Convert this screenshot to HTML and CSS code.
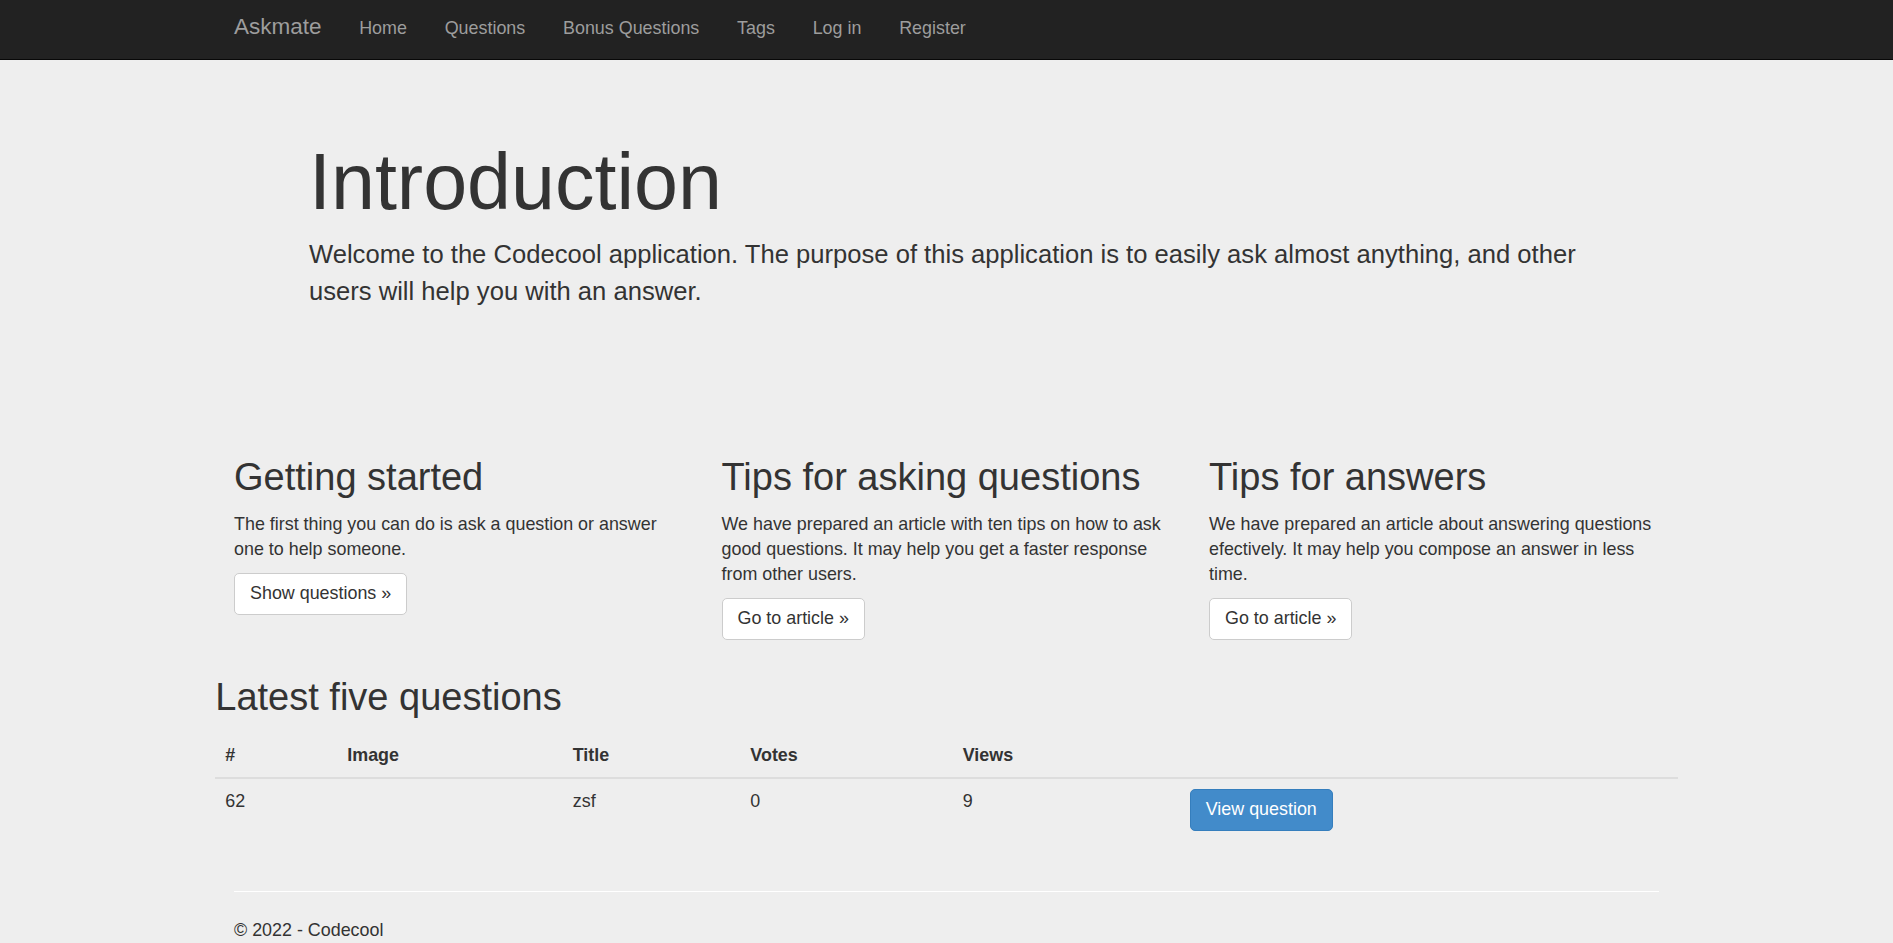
FILE: index.html
```html
<!DOCTYPE html>
<html lang="en">
<head>
<meta charset="utf-8">
<title>Askmate</title>
<link rel="stylesheet" href="styles.css">
</head>
<body>
<header class="navbar">
  <div class="container nav-inner">
    <a class="brand" href="#">Askmate</a>
    <ul class="nav-links">
      <li><a href="#">Home</a></li>
      <li><a href="#">Questions</a></li>
      <li><a href="#">Bonus Questions</a></li>
      <li><a href="#">Tags</a></li>
      <li><a href="#">Log in</a></li>
      <li><a href="#">Register</a></li>
    </ul>
  </div>
</header>

<main class="container">
  <section class="jumbotron">
    <h1>Introduction</h1>
    <p>Welcome to the Codecool application. The purpose of this application is to easily ask almost anything, and other users will help you with an answer.</p>
  </section>

  <section class="cols">
    <div class="col">
      <h2>Getting started</h2>
      <p>The first thing you can do is ask a question or answer one to help someone.</p>
      <p><a class="btn btn-default" href="#">Show questions &raquo;</a></p>
    </div>
    <div class="col">
      <h2>Tips for asking questions</h2>
      <p>We have prepared an article with ten tips on how to ask good questions. It may help you get a faster response from other users.</p>
      <p><a class="btn btn-default" href="#">Go to article &raquo;</a></p>
    </div>
    <div class="col">
      <h2>Tips for answers</h2>
      <p>We have prepared an article about answering questions efectively. It may help you compose an answer in less time.</p>
      <p><a class="btn btn-default" href="#">Go to article &raquo;</a></p>
    </div>
  </section>

  <section class="latest">
    <h2>Latest five questions</h2>
    <table class="table">
      <colgroup>
        <col class="c-id"><col class="c-img"><col class="c-title"><col class="c-votes"><col class="c-views"><col class="c-action">
      </colgroup>
      <thead>
        <tr><th>#</th><th>Image</th><th>Title</th><th>Votes</th><th>Views</th><th></th></tr>
      </thead>
      <tbody>
        <tr><td>62</td><td></td><td>zsf</td><td>0</td><td>9</td><td><a class="btn btn-primary" href="#">View question</a></td></tr>
      </tbody>
    </table>
  </section>

  <footer class="footer">
    <hr>
    <p>&copy; 2022 - Codecool</p>
  </footer>
</main>
</body>
</html>
```

FILE: styles.css
```css
* { box-sizing: border-box; }

html, body {
  margin: 0;
  padding: 0;
}

body {
  background: #eeeeee;
  color: #333333;
  font-family: "Liberation Sans", Arial, Helvetica, sans-serif;
  font-size: 17.9px;
  line-height: 25px;
  overflow: hidden;
}

a { text-decoration: none; }

.container {
  width: 1462.5px;
  margin: 0 auto;
  padding: 0 18.75px;
}

/* navbar */
.navbar {
  background: #222222;
  border-bottom: 1px solid #080808;
  height: 60px;
}

.nav-inner {
  display: flex;
  align-items: flex-start;
}

.brand {
  margin-left: -18.75px;
  padding: 14px 18.75px 0;
  height: 59px;
  font-size: 22.5px;
  line-height: 25px;
  color: #9d9d9d;
}

.nav-links {
  display: flex;
  list-style: none;
  margin: 0;
  padding: 0;
}

.nav-links a {
  display: block;
  padding: 16px 18.9px 18px;
  font-size: 17.9px;
  line-height: 25px;
  color: #9d9d9d;
}

/* jumbotron */
.jumbotron {
  padding: 79.4px 75px 60px;
  margin-bottom: 41px;
}

.jumbotron h1 {
  margin: 0 0 10px;
  font-size: 79px;
  line-height: 86.625px;
  font-weight: normal;
  color: #333333;
}

.jumbotron p {
  margin: 0 0 20.5px;
  font-size: 25.6px;
  line-height: 37px;
}

/* columns */
.cols {
  display: grid;
  grid-template-columns: repeat(3, 1fr);
  column-gap: 37.5px;
}

.col h2,
.latest h2 {
  margin: 25px 0 14px;
  font-size: 38px;
  line-height: 41.25px;
  font-weight: normal;
}

.col p {
  margin: 0 0 11.5px;
}

.col p:last-child {
  margin-top: -0.5px;
}

.latest h2 {
  margin-top: 26px;
  margin-bottom: 14px;
}

.btn {
  display: inline-block;
  padding: 7.5px 15px;
  font-size: 17.9px;
  line-height: 25px;
  border: 1.25px solid transparent;
  border-radius: 5px;
  vertical-align: middle;
  white-space: nowrap;
}

.btn-default {
  background: #ffffff;
  border-color: #cccccc;
  color: #333333;
}

.btn-primary {
  background: #428bca;
  border-color: #357ebd;
  color: #ffffff;
}

/* latest table */
.latest {
  margin: 0 -18.75px;
  padding-bottom: 25px;
}

.table {
  width: 100%;
  border-collapse: collapse;
  table-layout: fixed;
  margin: 0;
}

.c-id { width: 122px; }
.c-img { width: 225.5px; }
.c-title { width: 177.6px; }
.c-votes { width: 212.4px; }
.c-views { width: 227px; }

.table th,
.table td {
  padding: 10px;
  text-align: left;
  vertical-align: top;
  line-height: 25px;
}

.table th {
  font-weight: bold;
  padding-bottom: 9px;
  border-bottom: 2.5px solid #dddddd;
}

.table td {
  border-top: 1.25px solid #dddddd;
}

/* footer */
.footer hr {
  margin: 25px 0 26.5px;
  border: 0;
  border-top: 1px solid #ffffff;
}

.footer p {
  margin: 0 0 12.5px;
}
```
